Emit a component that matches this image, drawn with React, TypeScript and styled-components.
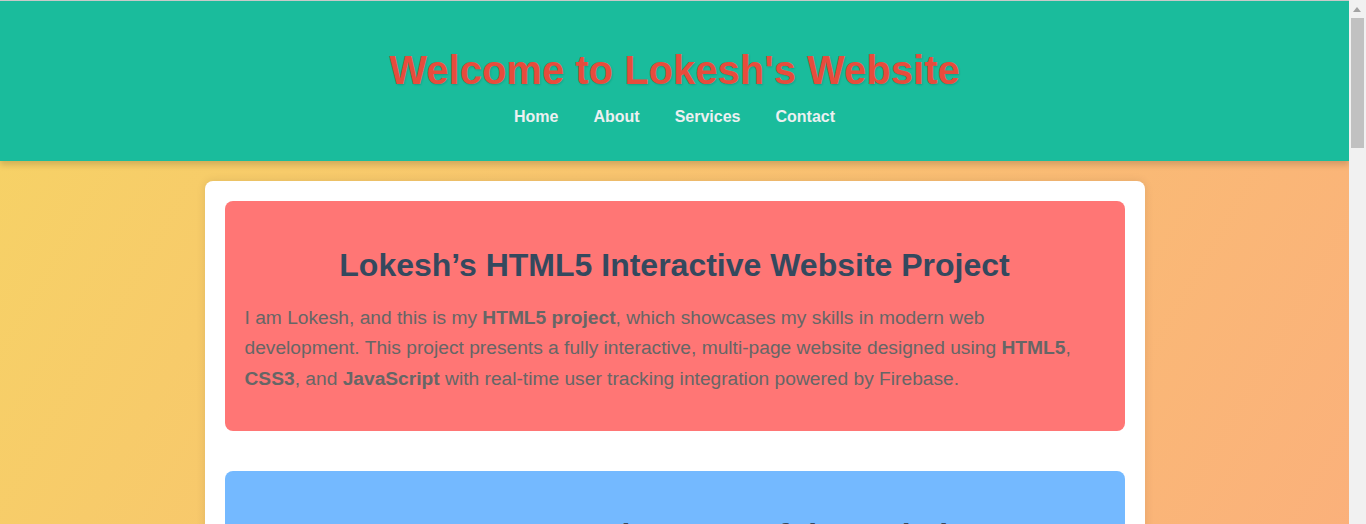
import React from 'react';
import styled, { createGlobalStyle } from 'styled-components';

const Global = createGlobalStyle`
  html, body {
    margin: 0;
    padding: 0;
  }
  body {
    margin-right: 17px;
    font-family: "Liberation Sans", Arial, sans-serif;
    background: linear-gradient(120deg, #f6d365 0%, #fda085 100%);
    border-top: 1px solid #c9c9c9;
  }
`;

// the page scrolls in the reference; the headless browser hides its scrollbar, so draw one
const ScrollTrack = styled.div`
  position: fixed;
  top: 0;
  right: 0;
  width: 17px;
  height: 100vh;
  background: #f1f1f1;
`;

const ScrollArrow = styled.div`
  position: absolute;
  top: 7px;
  left: 4px;
  width: 0;
  height: 0;
  border-left: 4.5px solid transparent;
  border-right: 4.5px solid transparent;
  border-bottom: 5px solid #a3a3a3;
`;

const ScrollThumb = styled.div`
  position: absolute;
  top: 18px;
  left: 2px;
  width: 13px;
  height: 130px;
  background: #c1c1c1;
`;

const Header = styled.header`
  background: #1abc9c;
  text-align: center;
  padding: 47px 20px 25px;
  box-shadow: 0 4px 6px rgba(0, 0, 0, 0.15);
`;

const Title = styled.h1`
  margin: 0 0 5px;
  font-size: 40px;
  font-weight: bold;
  color: #e74c3c;
  text-shadow: 1px 1px 2px rgba(0, 0, 0, 0.15);
`;

const Nav = styled.nav`
  display: flex;
  justify-content: center;
`;

const NavLink = styled.a`
  display: inline-block;
  padding: 10px 17.5px;
  color: #ecf0f1;
  font-size: 16px;
  font-weight: bold;
  text-decoration: none;
`;

const Container = styled.main`
  max-width: 900px;
  margin: 20px auto 40px;
  padding: 20px;
  background: #fff;
  border-radius: 8px;
  box-shadow: 0 0 10px rgba(0, 0, 0, 0.1);
`;

const Section = styled.section<{ $bg: string }>`
  background: ${(p) => p.$bg};
  border-radius: 8px;
  padding: 20px;
  margin-bottom: 40px;
  &:last-child {
    margin-bottom: 0;
  }
`;

const Heading = styled.h2`
  margin: 25.5px 0 19px;
  font-size: 32px;
  color: #34495e;
  text-align: center;
`;

const Text = styled.p`
  margin: 0 0 16.5px;
  font-size: 19.2px;
  line-height: 1.6;
  color: #666;
`;

const Footer = styled.footer`
  background: #1abc9c;
  color: #ecf0f1;
  text-align: center;
  padding: 22px 20px;
  font-size: 16px;
`;

const sections = [
  {
    bg: '#74b9ff',
    title: '1. Home Page: The Heart of the Website',
    text: 'The home page welcomes every visitor with a clean layout, a bold header and simple navigation, so anyone can quickly find the information they need. It introduces the project and links to every other page of the website in one place.',
  },
  {
    bg: '#55efc4',
    title: '2. About Page: Who I Am',
    text: 'The about page tells my story, my interests and the technologies I enjoy working with. It is written in plain semantic HTML5, styled with CSS3 and made friendly on every screen size, from phones to wide desktop monitors.',
  },
  {
    bg: '#a29bfe',
    title: '3. Services Page: What I Offer',
    text: 'The services page lists the work I can help with, from responsive layouts and accessible forms to interactive features built with JavaScript, each one explained with short examples of how it works in practice.',
  },
  {
    bg: '#fdcb6e',
    title: '4. Contact Page: Get in Touch',
    text: 'The contact page includes a simple form for questions and feedback. Every submission, along with visitor activity across the pages, is stored and tracked in real time using Firebase so nothing gets lost.',
  },
  {
    bg: '#81ecec',
    title: '5. Firebase: Real-Time User Tracking',
    text: 'Firebase records page visits and clicks as they happen, so I can see how people move through the website and which pages they enjoy most, and use that information to keep improving the project.',
  },
];

export default function App() {
  return (
    <>
      <Global />
      <Header>
        <Title>Welcome to Lokesh's Website</Title>
        <Nav>
          <NavLink href="#">Home</NavLink>
          <NavLink href="#">About</NavLink>
          <NavLink href="#">Services</NavLink>
          <NavLink href="#">Contact</NavLink>
        </Nav>
      </Header>
      <Container>
        <Section $bg="#ff7675">
          <Heading>Lokesh’s HTML5 Interactive Website Project</Heading>
          <Text>
            I am Lokesh, and this is my <strong>HTML5 project</strong>, which showcases my skills in modern web
            development. This project presents a fully interactive, multi-page website designed using{' '}
            <strong>HTML5</strong>, <strong>CSS3</strong>, and <strong>JavaScript</strong> with real-time user
            tracking integration powered by Firebase.
          </Text>
        </Section>
        {sections.map((s) => (
          <Section key={s.title} $bg={s.bg}>
            <Heading>{s.title}</Heading>
            <Text>{s.text}</Text>
          </Section>
        ))}
      </Container>
      <Footer>© 2025 Lokesh. All rights reserved.</Footer>
      <ScrollTrack>
        <ScrollArrow />
        <ScrollThumb />
      </ScrollTrack>
    </>
  );
}
